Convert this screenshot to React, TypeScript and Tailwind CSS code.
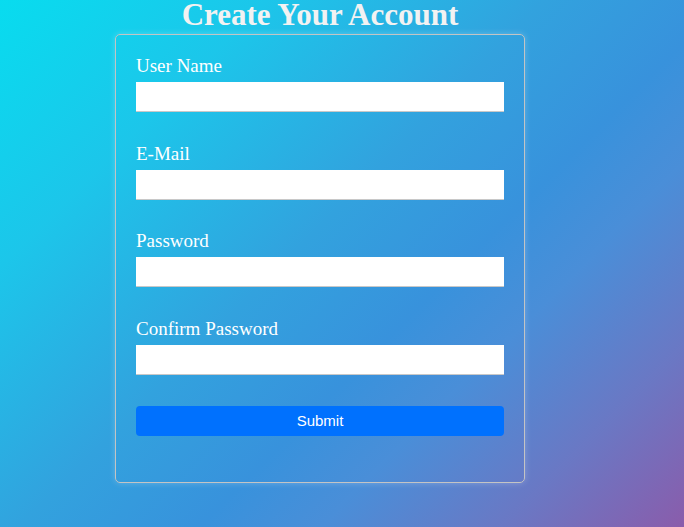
import React from 'react';

const fields = ['User Name', 'E-Mail', 'Password', 'Confirm Password'];

const App: React.FC = () => {
    return (
        <div className="min-h-screen w-full bg-[linear-gradient(135deg,#08dcef_0%,#1cc6ea_22%,#32a2de_45%,#3892dc_60%,#4a8ed8_70%,#6a78c4_85%,#8a5cab_100%)]">
            <div className="w-[410px] ml-[115px] flex flex-col">
                {/* Heading */}
                <h1 className="text-center text-[31px] leading-[30px] font-bold text-[#f2f2f2] mb-[4px] font-['Liberation_Serif',serif]">
                    Create Your Account
                </h1>

                {/* Form card */}
                <form
                    className="border border-[#c4c4c4] rounded-[5px] pt-[20px] px-[20px] pb-[46px] shadow-[0_0_6px_rgba(255,255,255,0.25)]"
                    onSubmit={e => e.preventDefault()}
                >
                    {fields.map(label => (
                        <div key={label} className="flex flex-col mb-[30.7px]">
                            <label className="text-[19px] leading-[22px] text-white mb-[5px] font-['Liberation_Serif',serif]">
                                {label}
                            </label>
                            <input
                                type={label.includes('Password') ? 'password' : 'text'}
                                className="h-[30px] w-full bg-white border-b border-[#c8c8c8] outline-none px-2"
                            />
                        </div>
                    ))}
                    <button
                        type="submit"
                        className="w-full h-[30px] rounded-[4px] bg-[#0071fe] text-white text-[15px] font-['Liberation_Sans',Arial,sans-serif]"
                    >
                        Submit
                    </button>
                </form>
            </div>
        </div>
    );
};

export default App;
